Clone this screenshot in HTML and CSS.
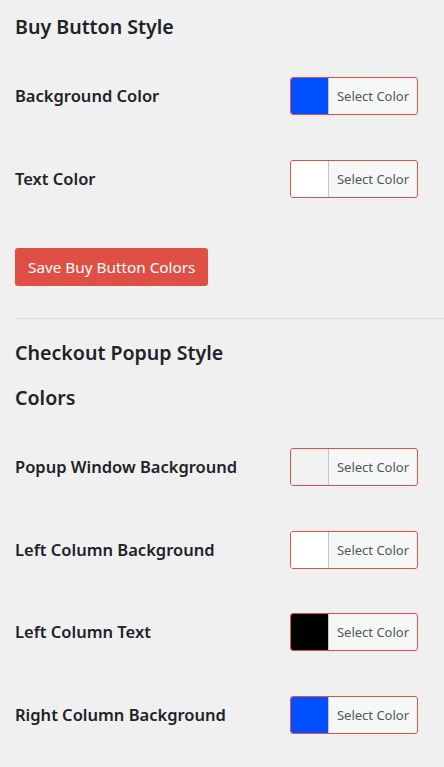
FILE: index.html
```html
<!DOCTYPE html>
<html>
  <head>
    <title>Buy Button Settings</title>
    <link rel="stylesheet" href="styles.css">
  </head>
  <body>
    <div class="settings">
      <h2 class="section-title">Buy Button Style</h2>

      <div class="rows rows-first">
        <div class="row">
          <span class="row-label">Background Color</span>
          <button type="button" class="picker">
            <span class="swatch swatch-blue"></span>
            <span class="picker-text">Select Color</span>
          </button>
        </div>
        <div class="row">
          <span class="row-label">Text Color</span>
          <button type="button" class="picker">
            <span class="swatch swatch-white"></span>
            <span class="picker-text">Select Color</span>
          </button>
        </div>
      </div>

      <button type="submit" class="save-button">Save Buy Button Colors</button>

      <hr class="divider">

      <h2 class="section-title section-title-second">Checkout Popup Style</h2>
      <h3 class="sub-title">Colors</h3>

      <div class="rows rows-popup">
        <div class="row">
          <span class="row-label">Popup Window Background</span>
          <button type="button" class="picker">
            <span class="swatch swatch-grey"></span>
            <span class="picker-text">Select Color</span>
          </button>
        </div>
        <div class="row">
          <span class="row-label">Left Column Background</span>
          <button type="button" class="picker">
            <span class="swatch swatch-white"></span>
            <span class="picker-text">Select Color</span>
          </button>
        </div>
        <div class="row">
          <span class="row-label">Left Column Text</span>
          <button type="button" class="picker">
            <span class="swatch swatch-black"></span>
            <span class="picker-text">Select Color</span>
          </button>
        </div>
        <div class="row">
          <span class="row-label">Right Column Background</span>
          <button type="button" class="picker">
            <span class="swatch swatch-blue"></span>
            <span class="picker-text">Select Color</span>
          </button>
        </div>
      </div>
    </div>
  </body>
</html>
```

FILE: styles.css
```css
body {
  margin: 0;
  background: #f0f0f1;
  color: #1d2327;
  font-family: "Noto Sans", "Open Sans", sans-serif;
}

.settings {
  padding: 12px 0 0 15px;
  display: flex;
  flex-direction: column;
  align-items: flex-start;
}

.section-title {
  margin: 0;
  font-size: 19.6px;
  font-weight: 600;
  line-height: 30px;
}

.section-title-second {
  margin-top: 19px;
}

.sub-title {
  margin: 15px 0 0;
  font-size: 19.6px;
  font-weight: 600;
  line-height: 30px;
}

.rows {
  display: flex;
  flex-direction: column;
  gap: 45px;
  margin-top: 35px;
  width: 403px;
}

.rows-popup {
  gap: 44.5px;
}

.row {
  display: flex;
  align-items: center;
  justify-content: space-between;
  height: 38px;
}

.row-label {
  font-size: 16.5px;
  font-weight: 600;
  margin-top: -1px;
}

/* color picker button, swatch on the left */
.picker {
  display: flex;
  align-items: stretch;
  width: 128px;
  height: 38px;
  padding: 0;
  border: 1px solid #e0514a;
  border-radius: 3px;
  background: #f6f7f7;
  overflow: hidden;
  cursor: pointer;
  font-family: inherit;
}

.swatch {
  width: 37px;
  border-right: 1px solid #c3c4c7;
}

.swatch-blue {
  background: #0050ff;
}

.swatch-white {
  background: #ffffff;
}

.swatch-grey {
  background: #f1f1f1;
}

.swatch-black {
  background: #000000;
}

.picker-text {
  flex: 1;
  display: flex;
  align-items: center;
  justify-content: center;
  font-size: 13px;
  color: #50575e;
}

.save-button {
  margin-top: 50px;
  height: 38px;
  padding: 0 13px;
  border: none;
  border-radius: 3px;
  background: #e04f45;
  color: #fff;
  font-family: inherit;
  font-size: 15.3px;
  cursor: pointer;
}

.divider {
  align-self: stretch;
  margin: 32px 0 0;
  border: none;
  border-top: 1px solid #dcdcde;
}
```
